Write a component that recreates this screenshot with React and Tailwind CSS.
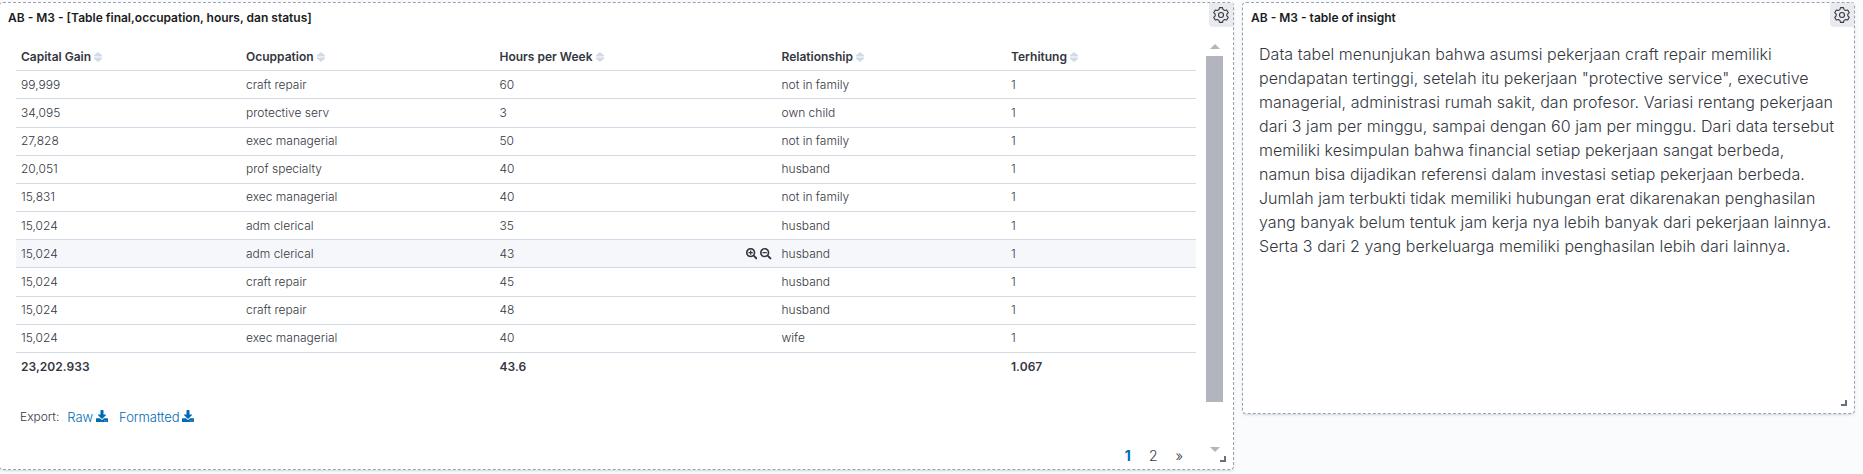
import { FaSearchPlus, FaSearchMinus, FaDownload } from "react-icons/fa";

const columns = ["Capital Gain", "Ocuppation", "Hours per Week", "Relationship", "Terhitung"];

const rows = [
  ["99,999", "craft repair", "60", "not in family", "1"],
  ["34,095", "protective serv", "3", "own child", "1"],
  ["27,828", "exec managerial", "50", "not in family", "1"],
  ["20,051", "prof specialty", "40", "husband", "1"],
  ["15,831", "exec managerial", "40", "not in family", "1"],
  ["15,024", "adm clerical", "35", "husband", "1"],
  ["15,024", "adm clerical", "43", "husband", "1"],
  ["15,024", "craft repair", "45", "husband", "1"],
  ["15,024", "craft repair", "48", "husband", "1"],
  ["15,024", "exec managerial", "40", "wife", "1"],
];
const totals = ["23,202.933", "", "43.6", "", "1.067"];
const activeRow = 6;

const lines = [
  "Data tabel menunjukan bahwa asumsi pekerjaan craft repair memiliki",
  "pendapatan tertinggi, setelah itu pekerjaan \"protective service\", executive",
  "managerial, administrasi rumah sakit, dan profesor. Variasi rentang pekerjaan",
  "dari 3 jam per minggu, sampai dengan 60 jam per minggu. Dari data tersebut",
  "memiliki kesimpulan bahwa financial setiap pekerjaan sangat berbeda,",
  "namun bisa dijadikan referensi dalam investasi setiap pekerjaan berbeda.",
  "Jumlah jam terbukti tidak memiliki hubungan erat dikarenakan penghasilan",
  "yang banyak belum tentuk jam kerja nya lebih banyak dari pekerjaan lainnya.",
  "Serta 3 dari 2 yang berkeluarga memiliki penghasilan lebih dari lainnya.",
];

const rowGrid = "grid grid-cols-[225px_253.5px_282px_229.5px_190px] items-center";

function SortIcon() {
  return (
    <svg className="ml-[3px] h-[10px] w-2" viewBox="0 0 8 10" fill="#d3dae6">
      <path d="M4 0 8 3.2v1.2H0V3.200zM0 5.600h8v1.200L4 10 0 6.800z" />
    </svg>
  );
}

function Gear() {
  return (
    <svg className="h-4 w-4" viewBox="0 0 16 16" fill="none" stroke="#343741" strokeWidth="1.1" strokeLinejoin="round">
      <circle cx="8" cy="8" r="2.5" />
      <path d="M6.5.6h3l.6 2 1.5.9 2.1-.5 1.6 2.7-1.5 1.5v1.6l1.5 1.5-1.6 2.7-2.1-.5-1.5.9-.6 2h-3l-.6-2-1.5-.9-2.1.5L.7 10.3l1.5-1.5V7.2L.7 5.7 2.300 3l2.1.5 1.5-.9z" />
    </svg>
  );
}

function ResizeHandle() {
  return <span className="absolute right-[7px] bottom-[7px] h-[6px] w-[6px] border-r-2 border-b-2 border-[#69707d]" />;
}

function Panel({ title, className, children }) {
  return (
    <section
      className={
        "relative flex flex-col rounded-[4px] border border-dashed border-[#98a2b3] bg-white shadow-[0_2px_2px_-1px_rgba(152,162,179,0.3),0_1px_5px_-2px_rgba(152,162,179,0.3)] " +
        className
      }
    >
      <header className="flex h-6 shrink-0 items-start justify-between">
        <h2 className="pl-2 text-[12px] leading-[29px] font-semibold text-[#1a1c21]">{title}</h2>
        <button className="flex h-6 w-6 items-center justify-center rounded-bl-[4px] bg-[#e9eaed]">
          <Gear />
        </button>
      </header>
      {children}
      <ResizeHandle />
    </section>
  );
}

export default function App() {
  return (
    <main className="flex h-[474px] w-[1863px] items-start gap-2 overflow-hidden bg-[#fafbfd] pt-[2px] font-['Inter',sans-serif] text-[#343741]">
      <Panel title="AB - M3 - [Table final,occupation, hours, dan status]" className="-ml-px h-[468px] w-[1235px]">
        <div className="flex flex-1 pl-4">
          <div className="flex w-[1180px] flex-col pt-[17px] text-[12px]">
            <div className={rowGrid + " h-[27.15px] border-b border-[#d3dae6] font-semibold"}>
              {columns.map((c) => (
                <span key={c} className="flex items-center pl-[5px]">
                  {c}
                  <SortIcon />
                </span>
              ))}
            </div>
            {rows.map((row, i) => (
              <div
                key={i}
                className={rowGrid + " h-[28.2px] border-b border-[#d3dae6] font-light " + (i === activeRow ? "bg-[#f5f7fa]" : "")}
              >
                {row.map((cell, j) => (
                  <span key={j} className="flex items-center justify-between pr-[5px] pl-[5px]">
                    {cell}
                    {i === activeRow && j === 2 && (
                      <span className="flex gap-[3px] text-[11.5px] text-[#343741]">
                        <FaSearchPlus />
                        <FaSearchMinus />
                      </span>
                    )}
                  </span>
                ))}
              </div>
            ))}
            <div className={rowGrid + " h-[28px] font-semibold tracking-[0.05px]"}>
              {totals.map((t, i) => (
                <span key={i} className="pl-[5px]">{t}</span>
              ))}
            </div>
            <div className="mt-[26.35px] flex h-5 items-center pl-1 font-light">
              <span>Export:</span>
              <a className="ml-[8px] flex items-center gap-[3px] text-[13px] tracking-[-0.05px] text-[#006bb4]">
                Raw <FaDownload className="-mt-[2px] h-3 w-3" />
              </a>
              <a className="ml-[11px] flex items-center gap-[3px] text-[13px] tracking-[-0.05px] text-[#006bb4]">
                Formatted <FaDownload className="-mt-[2px] h-3 w-3" />
              </a>
            </div>
            <nav className="mt-[18px] flex h-5 items-center justify-end gap-[18px] pr-[13px] text-[14px] font-light">
              <span className="font-bold text-[#006bb4]">1</span>
              <span>2</span>
              <span>»</span>
            </nav>
          </div>
          <div className="ml-[10px] flex w-[17px] flex-col items-center pt-[17px]">
            <span className="h-0 w-0 border-x-[5px] border-b-[5px] border-x-transparent border-b-[#b2b5be]" />
            <span className="mt-[7px] h-[346px] w-full bg-[#b2b5be]" />
            <span className="mt-[45px] h-0 w-0 border-x-[5px] border-t-[5px] border-x-transparent border-t-[#b2b5be]" />
          </div>
        </div>
      </Panel>
      <Panel title="AB - M3 - table of insight" className="h-[412px] w-[613px]">
        <div className="pt-[15px] pl-4 text-[16px] leading-6 font-light tracking-[0.05px]">
          {lines.map((l) => (
            <p key={l} className="whitespace-nowrap">{l}</p>
          ))}
        </div>
      </Panel>
    </main>
  );
}
